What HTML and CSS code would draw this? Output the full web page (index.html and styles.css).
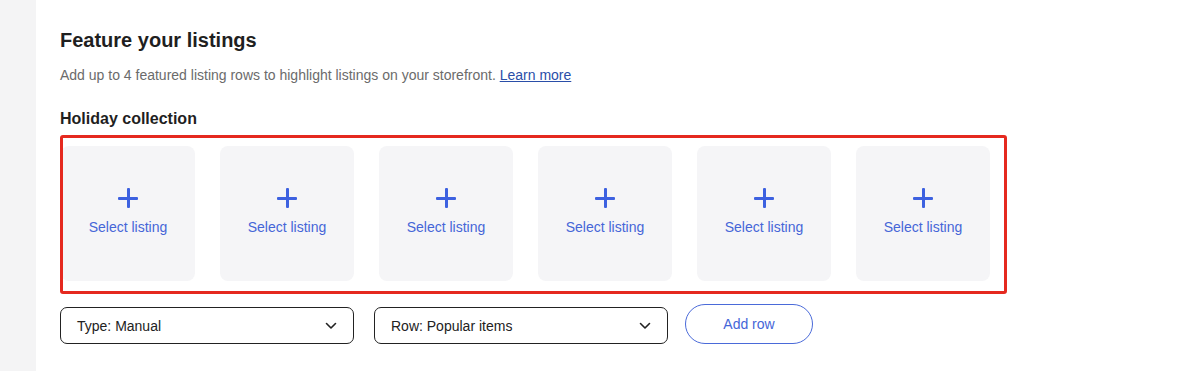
FILE: index.html
```html
<!DOCTYPE html>
<html lang="en">
<head>
    <meta charset="UTF-8">
    <title>Feature your listings</title>
    <link rel="stylesheet" href="styles.css">
</head>
<body>
<div class="page">
    <div class="sidebar"></div>

    <div class="main">
        <h2 class="title">Feature your listings</h2>
        <p class="desc">Add up to 4 featured listing rows to highlight listings on your storefront. <a href="#">Learn more</a></p>

        <h3 class="rowtitle">Holiday collection</h3>

        <!-- listing row -->
        <div class="rowwrap">
            <div class="cards">
                <div class="card"><span class="plus"></span><span class="cardlabel">Select listing</span></div>
                <div class="card"><span class="plus"></span><span class="cardlabel">Select listing</span></div>
                <div class="card"><span class="plus"></span><span class="cardlabel">Select listing</span></div>
                <div class="card"><span class="plus"></span><span class="cardlabel">Select listing</span></div>
                <div class="card"><span class="plus"></span><span class="cardlabel">Select listing</span></div>
                <div class="card"><span class="plus"></span><span class="cardlabel">Select listing</span></div>
            </div>
            <div class="highlight"></div>
        </div>

        <!-- controls -->
        <div class="controls">
            <div class="select">
                <span>Type: Manual</span>
                <svg width="12" height="8" viewBox="0 0 12 8"><path d="M1.5 1.5 L6 6 L10.5 1.5" fill="none" stroke="#222" stroke-width="1.6" stroke-linecap="round" stroke-linejoin="round"/></svg>
            </div>
            <div class="select">
                <span>Row: Popular items</span>
                <svg width="12" height="8" viewBox="0 0 12 8"><path d="M1.5 1.5 L6 6 L10.5 1.5" fill="none" stroke="#222" stroke-width="1.6" stroke-linecap="round" stroke-linejoin="round"/></svg>
            </div>
            <button class="addbtn">Add row</button>
        </div>
    </div>
</div>
</body>
</html>
```

FILE: styles.css
```css
body {
    margin: 0;
    font-family: "Liberation Sans", Arial, sans-serif;
    color: #222;
    background: #fff;
}

.page {
    display: flex;
    height: 371px;
}

/* left gray strip */
.sidebar {
    width: 36px;
    background-color: #f4f4f5;
    flex-shrink: 0;
}

.main {
    padding-left: 24px;
    padding-top: 28px;
}

.title {
    margin: 0;
    font-size: 20px;
    font-weight: bold;
    color: #1f1f1f;
    line-height: 24px;
}

.desc {
    margin: 14px 0 0 0;
    font-size: 14px;
    color: #6b6b6b;
    line-height: 18px;
}

.desc a {
    color: #2a4ea8;
    text-decoration: underline;
}

.rowtitle {
    margin: 26px 0 0 0;
    font-size: 16px;
    font-weight: bold;
    color: #1f1f1f;
    line-height: 18px;
}

/* listing cards */
.rowwrap {
    position: relative;
    margin-top: 7px;
    padding: 11px 0 13px 1px;
    width: 946px;
}

.cards {
    display: flex;
    gap: 25px;
}

.card {
    width: 134px;
    height: 135px;
    background-color: #f5f5f7;
    border-radius: 8px;
    display: flex;
    flex-direction: column;
    align-items: center;
}

.plus {
    position: relative;
    width: 20px;
    height: 20px;
    margin-top: 42px;
}

.plus:before, .plus:after {
    content: "";
    position: absolute;
    background-color: #3d61e0;
    border-radius: 1px;
}

.plus:before {
    left: 0;
    top: 8.5px;
    width: 20px;
    height: 3px;
}

.plus:after {
    top: 0;
    left: 8.5px;
    width: 3px;
    height: 20px;
}

.cardlabel {
    margin-top: 11px;
    font-size: 14px;
    color: #4566d8;
}

/* red annotation box */
.highlight {
    position: absolute;
    left: 0;
    top: 0;
    right: 0;
    bottom: 0;
    border: 3px solid #e5291f;
    border-radius: 3px;
}

/* bottom controls */
.controls {
    display: flex;
    align-items: center;
    gap: 20px;
    margin-top: 13px;
}

.select {
    height: 35px;
    width: 260px;
    border: 1px solid #222;
    border-radius: 7px;
    display: flex;
    align-items: center;
    justify-content: space-between;
    padding: 0 16px 0 16px;
    font-size: 14px;
    color: #222;
}

.addbtn {
    margin-left: -3px;
    width: 128px;
    height: 40px;
    border: 1px solid #4a6ad9;
    border-radius: 20px;
    background: #fff;
    font-family: "Liberation Sans", Arial, sans-serif;
    font-size: 14px;
    color: #4566d8;
    margin-top: -3px;
}
```
